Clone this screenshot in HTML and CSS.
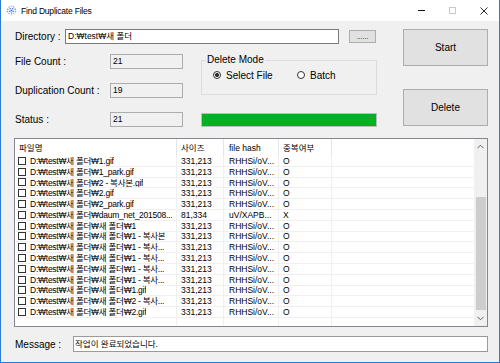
FILE: index.html
```html
<!DOCTYPE html>
<html lang="ko">
<head>
    <meta charset="UTF-8">
    <meta name="viewport" content="width=device-width, initial-scale=1.0">
    <title>Find Duplicate Files</title>
    <link rel="stylesheet" href="styles.css">
</head>
<body>
<div class="window">
    <div class="titlebar">
        <svg class="app-icon" viewBox="0 0 11 11">
            <circle cx="5.5" cy="1.2" r="0.8" fill="#9db6ea"/>
            <circle cx="3.2" cy="2" r="0.8" fill="#7d9fe3"/>
            <circle cx="7.8" cy="2" r="0.8" fill="#7d9fe3"/>
            <circle cx="1.8" cy="4.2" r="0.8" fill="#5a84dc"/>
            <circle cx="4.3" cy="3.8" r="0.8" fill="#3d6fd8"/>
            <circle cx="6.7" cy="3.8" r="0.8" fill="#3d6fd8"/>
            <circle cx="9.2" cy="4.2" r="0.8" fill="#5a84dc"/>
            <circle cx="1.5" cy="6.6" r="0.8" fill="#7d9fe3"/>
            <circle cx="3.9" cy="6.2" r="0.8" fill="#2f63d4"/>
            <circle cx="5.5" cy="5.5" r="0.8" fill="#2f63d4"/>
            <circle cx="7.1" cy="6.2" r="0.8" fill="#2f63d4"/>
            <circle cx="9.5" cy="6.6" r="0.8" fill="#7d9fe3"/>
            <circle cx="2.9" cy="8.6" r="0.8" fill="#9db6ea"/>
            <circle cx="5.5" cy="8" r="0.8" fill="#5a84dc"/>
            <circle cx="8.1" cy="8.6" r="0.8" fill="#9db6ea"/>
            <circle cx="5.5" cy="10" r="0.8" fill="#b9cbf0"/>
        </svg>
        <span class="title">Find Duplicate Files</span>
        <div class="controls">
            <span class="ctl"><svg width="7" height="1"><rect width="7" height="1" fill="#111"/></svg></span>
            <span class="ctl"><svg width="7" height="7"><rect x="0.5" y="0.5" width="6" height="6" fill="none" stroke="#c8c8c8"/></svg></span>
            <span class="ctl"><svg width="8" height="8"><path d="M0.5 0.5 L7.5 7.5 M7.5 0.5 L0.5 7.5" stroke="#111" stroke-width="0.9"/></svg></span>
        </div>
    </div>

    <div class="client">
        <div class="top">
            <div class="top-left">
                <div class="dir-row">
                    <label class="lbl dir-lbl">Directory :</label>
                    <div class="textbox dir-box">D:₩test₩새 폴더</div>
                    <button class="btn browse">......</button>
                </div>

                <div class="stats">
                    <label class="lbl r1">File Count :</label>
                    <div class="textbox ro r1">21</div>
                    <fieldset class="group">
                        <legend>Delete Mode</legend>
                        <div class="radios">
                            <label class="radio first"><span class="dot on"></span>Select File</label>
                            <label class="radio"><span class="dot"></span>Batch</label>
                        </div>
                    </fieldset>

                    <label class="lbl r2">Duplication Count :</label>
                    <div class="textbox ro r2">19</div>

                    <label class="lbl r3">Status :</label>
                    <div class="textbox ro r3">21</div>
                    <div class="progress"><div class="progress-fill" style="width: 100%"></div></div>
                </div>
            </div>

            <div class="buttons">
                <button class="btn big">Start</button>
                <button class="btn big">Delete</button>
            </div>
        </div>

        <div class="list">
            <div class="list-main">
                <div class="list-head">
                    <div class="hcell">파일명</div>
                    <div class="hcell">사이즈</div>
                    <div class="hcell hash">file hash</div>
                    <div class="hcell">중복여부</div>
                    <div class="hcell last"></div>
                </div>
                <div class="list-rows">
                    <div class="row"><div class="cell name"><span class="check"></span><span class="path">D:₩test₩새 폴더₩1.gif</span></div><div class="cell">331,213</div><div class="cell hash">RHHSi/oV...</div><div class="cell">O</div><div class="cell last"></div></div>
                    <div class="row"><div class="cell name"><span class="check"></span><span class="path">D:₩test₩새 폴더₩1_park.gif</span></div><div class="cell">331,213</div><div class="cell hash">RHHSi/oV...</div><div class="cell">O</div><div class="cell last"></div></div>
                    <div class="row"><div class="cell name"><span class="check"></span><span class="path">D:₩test₩새 폴더₩2 - 복사본.gif</span></div><div class="cell">331,213</div><div class="cell hash">RHHSi/oV...</div><div class="cell">O</div><div class="cell last"></div></div>
                    <div class="row"><div class="cell name"><span class="check"></span><span class="path">D:₩test₩새 폴더₩2.gif</span></div><div class="cell">331,213</div><div class="cell hash">RHHSi/oV...</div><div class="cell">O</div><div class="cell last"></div></div>
                    <div class="row"><div class="cell name"><span class="check"></span><span class="path">D:₩test₩새 폴더₩2_park.gif</span></div><div class="cell">331,213</div><div class="cell hash">RHHSi/oV...</div><div class="cell">O</div><div class="cell last"></div></div>
                    <div class="row"><div class="cell name"><span class="check"></span><span class="path">D:₩test₩새 폴더₩daum_net_201508...</span></div><div class="cell">81,334</div><div class="cell hash">uV/XAPB...</div><div class="cell">X</div><div class="cell last"></div></div>
                    <div class="row"><div class="cell name"><span class="check"></span><span class="path">D:₩test₩새 폴더₩새 폴더₩1</span></div><div class="cell">331,213</div><div class="cell hash">RHHSi/oV...</div><div class="cell">O</div><div class="cell last"></div></div>
                    <div class="row"><div class="cell name"><span class="check"></span><span class="path">D:₩test₩새 폴더₩새 폴더₩1 - 복사본</span></div><div class="cell">331,213</div><div class="cell hash">RHHSi/oV...</div><div class="cell">O</div><div class="cell last"></div></div>
                    <div class="row"><div class="cell name"><span class="check"></span><span class="path">D:₩test₩새 폴더₩새 폴더₩1 - 복사...</span></div><div class="cell">331,213</div><div class="cell hash">RHHSi/oV...</div><div class="cell">O</div><div class="cell last"></div></div>
                    <div class="row"><div class="cell name"><span class="check"></span><span class="path">D:₩test₩새 폴더₩새 폴더₩1 - 복사...</span></div><div class="cell">331,213</div><div class="cell hash">RHHSi/oV...</div><div class="cell">O</div><div class="cell last"></div></div>
                    <div class="row"><div class="cell name"><span class="check"></span><span class="path">D:₩test₩새 폴더₩새 폴더₩1 - 복사...</span></div><div class="cell">331,213</div><div class="cell hash">RHHSi/oV...</div><div class="cell">O</div><div class="cell last"></div></div>
                    <div class="row"><div class="cell name"><span class="check"></span><span class="path">D:₩test₩새 폴더₩새 폴더₩1 - 복사...</span></div><div class="cell">331,213</div><div class="cell hash">RHHSi/oV...</div><div class="cell">O</div><div class="cell last"></div></div>
                    <div class="row"><div class="cell name"><span class="check"></span><span class="path">D:₩test₩새 폴더₩새 폴더₩1.gif</span></div><div class="cell">331,213</div><div class="cell hash">RHHSi/oV...</div><div class="cell">O</div><div class="cell last"></div></div>
                    <div class="row"><div class="cell name"><span class="check"></span><span class="path">D:₩test₩새 폴더₩새 폴더₩2 - 복사...</span></div><div class="cell">331,213</div><div class="cell hash">RHHSi/oV...</div><div class="cell">O</div><div class="cell last"></div></div>
                    <div class="row"><div class="cell name"><span class="check"></span><span class="path">D:₩test₩새 폴더₩새 폴더₩2.gif</span></div><div class="cell">331,213</div><div class="cell hash">RHHSi/oV...</div><div class="cell">O</div><div class="cell last"></div></div>
                    <div class="row"><div class="cell name"></div><div class="cell"></div><div class="cell hash"></div><div class="cell"></div><div class="cell last"></div></div>
                </div>
            </div>
            <div class="vscroll">
                <div class="sb-btn"><svg width="7" height="5" viewBox="0 0 7 5"><path d="M0.5 4.2 L3.5 1.2 L6.5 4.2" fill="none" stroke="#606060"/></svg></div>
                <div class="sb-track"><div class="sb-thumb"></div></div>
                <div class="sb-btn"><svg width="7" height="5" viewBox="0 0 7 5"><path d="M0.5 0.8 L3.5 3.8 L6.5 0.8" fill="none" stroke="#606060"/></svg></div>
            </div>
        </div>

        <div class="msg-row">
            <label class="lbl msg-lbl">Message :</label>
            <div class="textbox msg-box">작업이 완료되었습니다.</div>
        </div>
    </div>
</div>
</body>
</html>
```

FILE: styles.css
```css
* {
    margin: 0;
    padding: 0;
    box-sizing: border-box;
}

body {
    background-color: #fff;
    color: #000;
    font-family: "Liberation Sans", "Noto Sans CJK KR", sans-serif;
}

.window {
    width: 500px;
    height: 363px;
    border: 1px solid #2b7bd2;
    border-top: none;
    background-color: #f0f0f0;
    display: flex;
    flex-direction: column;
}

/* title bar */
.titlebar {
    height: 21px;
    background-color: #fff;
    display: flex;
    align-items: center;
    padding-left: 5px;
}

.app-icon {
    width: 11px;
    height: 11px;
}

.title {
    margin-left: 4px;
    font-size: 8.5px;
    letter-spacing: -0.2px;
}

.controls {
    margin-left: auto;
    display: flex;
    height: 100%;
}

.ctl {
    width: 31px;
    display: flex;
    align-items: center;
    justify-content: center;
}

/* client area */
.client {
    flex: 1;
    padding: 8px 11px 0 13px;
    display: flex;
    flex-direction: column;
}

.top {
    display: flex;
    justify-content: space-between;
    height: 109px;
}

.top-left {
    width: 363px;
}

.lbl {
    font-size: 10px;
    padding-left: 1px;
    white-space: nowrap;
}

.dir-row {
    display: flex;
    align-items: center;
    height: 15px;
}

.dir-lbl {
    width: 51px;
}

.textbox {
    height: 15px;
    border: 1px solid #7a7a7a;
    font-size: 8.5px;
    line-height: 13px;
    padding-left: 2px;
    white-space: nowrap;
    overflow: hidden;
}

.dir-box {
    width: 274px;
    background-color: #fff;
}

.ro {
    background-color: #f0f0f0;
    border-color: #adadad;
}

.btn {
    background-color: #e1e1e1;
    border: 1px solid #adadad;
    font-family: inherit;
    font-size: 10px;
    color: #000;
}

.browse {
    width: 27px;
    height: 13px;
    margin-left: 10px;
    font-size: 7px;
    line-height: 8px;
}

.stats {
    display: grid;
    grid-template-columns: 96px 73px 18px 176px;
    grid-template-rows: 15px 15px 15px;
    row-gap: 14px;
    margin-top: 10px;
    align-items: center;
}

.r1 { grid-row: 1; }
.r2 { grid-row: 2; }
.r3 { grid-row: 3; }

.group {
    grid-column: 4;
    grid-row: 1 / span 2;
    align-self: start;
    margin-top: 1px;
    height: 40px;
    border: 1px solid #dcdcdc;
    min-width: 0;
}

.group legend {
    font-size: 10px;
    line-height: 10px;
    margin-left: 4px;
    padding: 0 1px;
}

.radios {
    display: flex;
    padding-left: 11px;
    margin-top: 5px;
}

.radio {
    display: flex;
    align-items: center;
    height: 10px;
    font-size: 10px;
}

.radio.first {
    width: 84px;
}

.dot {
    width: 8px;
    height: 8px;
    border: 1px solid #333;
    border-radius: 50%;
    background-color: #fff;
    margin-right: 5px;
}

.dot.on {
    background: radial-gradient(circle, #333 0 1.8px, #fff 2.3px);
}

.progress {
    grid-column: 4;
    grid-row: 3;
    height: 14px;
    border: 1px solid #bcbcbc;
    background-color: #e6e6e6;
}

.progress-fill {
    height: 100%;
    background-color: #06b025;
}

.buttons {
    width: 85px;
    display: flex;
    flex-direction: column;
    gap: 23px;
}

.big {
    height: 37px;
}

/* list view */
.list {
    height: 189px;
    border: 1px solid #828790;
    background-color: #fff;
    display: flex;
}

.list-main {
    flex: 1;
    display: flex;
    flex-direction: column;
    overflow: hidden;
}

.list-head,
.row {
    display: grid;
    grid-template-columns: 162px 47px 55px 53px 1fr;
    font-size: 8.5px;
}

.list-head {
    height: 17px;
    flex: none;
}

.hcell {
    display: flex;
    align-items: center;
    padding-left: 4px;
    border-right: 1px solid #e5e5e5;
    line-height: 10px;
    white-space: nowrap;
}

.list-rows {
    flex: 1;
    overflow: hidden;
}

.row {
    height: 10.8px;
    border-bottom: 1px solid #f0f0f0;
}

.cell {
    display: flex;
    align-items: center;
    padding-left: 4px;
    border-right: 1px solid #f0f0f0;
    line-height: 10px;
    white-space: nowrap;
    overflow: hidden;
}

.hash {
    padding-left: 5px;
}

.last {
    border-right: none;
}

.cell.name {
    padding-left: 3px;
}

.check {
    flex: none;
    width: 8px;
    height: 8px;
    border: 1px solid #333;
    background-color: #fff;
    margin-right: 4px;
}

.path {
    min-width: 0;
    overflow: hidden;
    text-overflow: ellipsis;
    letter-spacing: -0.25px;
}

.vscroll {
    width: 13px;
    background-color: #f0f0f0;
    display: flex;
    flex-direction: column;
}

.sb-btn {
    height: 15px;
    display: flex;
    align-items: center;
    justify-content: center;
}

.sb-track {
    flex: 1;
}

.sb-thumb {
    margin: 43px 1px 0 2px;
    height: 113px;
    background-color: #cdcdcd;
}

/* message */
.msg-row {
    display: flex;
    align-items: center;
    margin-top: 9px;
}

.msg-lbl {
    width: 59px;
}

.msg-box {
    flex: 1;
    height: 16px;
    background-color: #fff;
    border-color: #9a9a9a;
    padding-left: 1px;
    line-height: 14px;
}
```
